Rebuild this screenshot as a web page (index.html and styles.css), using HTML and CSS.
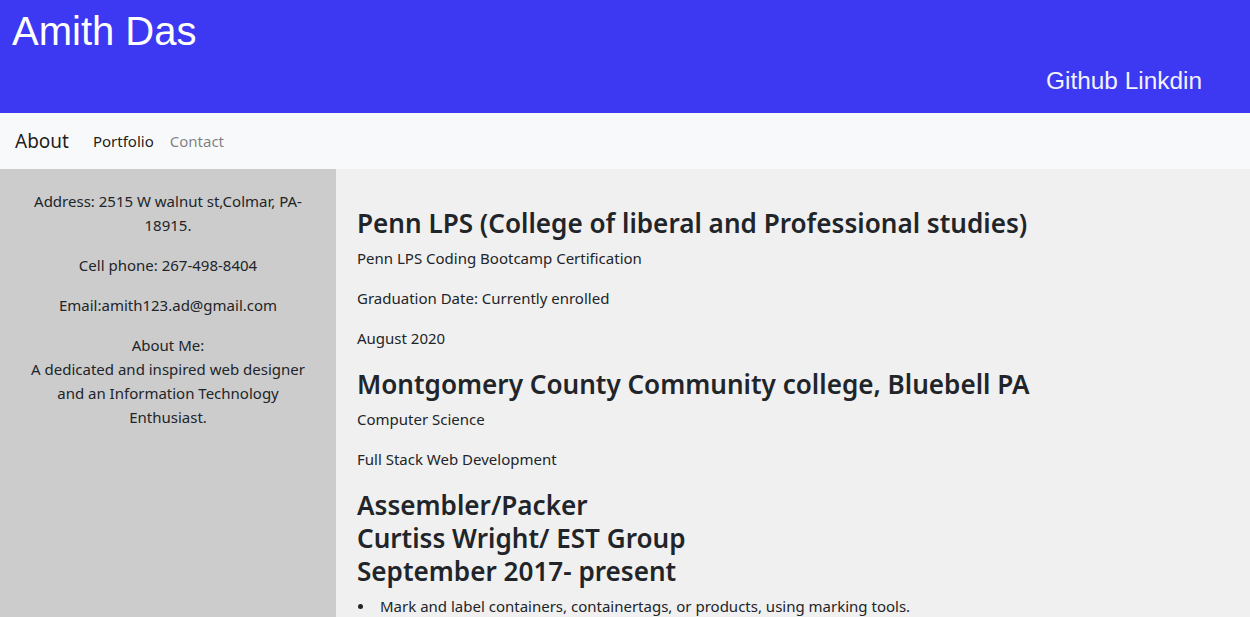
FILE: index.html
```html
<!DOCTYPE html>
<html lang="en">
<head>
<meta charset="utf-8">
<title>Amith Das</title>
<link rel="stylesheet" href="styles.css">
</head>
<body>
<header class="masthead">
  <h1 class="masthead-title">Amith Das</h1>
  <div class="masthead-links">
    <a href="#" class="masthead-link">Github</a>
    <a href="#" class="masthead-link">Linkdin</a>
  </div>
</header>
<nav class="navbar">
  <a href="#" class="navbar-brand">About</a>
  <a href="#" class="nav-link active">Portfolio</a>
  <a href="#" class="nav-link">Contact</a>
</nav>
<div class="layout">
  <aside class="sidebar">
    <p>Address: 2515 W walnut st,Colmar, PA-18915.</p>
    <p>Cell phone: 267-498-8404</p>
    <p>Email:amith123.ad@gmail.com</p>
    <p>About Me:<br>A dedicated and inspired web designer and an Information Technology Enthusiast.</p>
  </aside>
  <main class="content">
    <h3 class="section-title">Penn LPS (College of liberal and Professional studies)</h3>
    <p>Penn LPS Coding Bootcamp Certification</p>
    <p>Graduation Date: Currently enrolled</p>
    <p>August 2020</p>
    <h3 class="section-title">Montgomery County Community college, Bluebell PA</h3>
    <p>Computer Science</p>
    <p>Full Stack Web Development</p>
    <h3 class="section-title">Assembler/Packer<br>Curtiss Wright/ EST Group<br>September 2017- present</h3>
    <ul class="duties">
      <li>Mark and label containers, containertags, or products, using marking tools.</li>
    </ul>
  </main>
</div>
</body>
</html>
```
FILE: styles.css
```css
html, body {
  margin: 0;
  padding: 0;
}
body {
  font-family: "Noto Sans", "Open Sans", sans-serif;
  font-size: 15px;
  line-height: 24px;
  color: #212529;
  background: #f0f0f0;
  overflow: hidden;
}
.masthead {
  background: #3d38f1;
  height: 113px;
  box-sizing: border-box;
  padding: 7px 48px 0 12px;
  display: flex;
  flex-direction: column;
}
.masthead-title {
  margin: 0;
  font-family: "Liberation Sans", Arial, sans-serif;
  font-size: 40px;
  line-height: 48px;
  font-weight: 400;
  color: #ffffff;
}
.masthead-links {
  align-self: flex-end;
  margin-top: 12px;
  font-family: "Liberation Sans", Arial, sans-serif;
  font-size: 24.4px;
  line-height: 28px;
}
.masthead-link {
  color: #f2f2ff;
  text-decoration: none;
}
.navbar {
  background: #f8f9fa;
  height: 56px;
  box-sizing: border-box;
  padding: 0 16px 0 15px;
  display: flex;
  align-items: center;
}
.navbar-brand {
  font-size: 19px;
  color: rgba(0, 0, 0, 0.9);
  text-decoration: none;
  margin-right: 16px;
}
.nav-link {
  font-size: 15px;
  padding: 0 8px;
  color: rgba(0, 0, 0, 0.5);
  text-decoration: none;
}
.nav-link.active {
  color: rgba(0, 0, 0, 0.9);
}
.layout {
  display: flex;
  min-height: 448px;
}
.sidebar {
  width: 336px;
  flex: 0 0 336px;
  box-sizing: border-box;
  background: #cccccc;
  padding: 20px 23px 0;
  text-align: center;
}
.sidebar p {
  margin: 0 0 16px;
}
.content {
  flex: 1;
  padding: 36px 21px 0;
}
.content p {
  margin: 0 0 16px;
}
.section-title {
  margin: 0 0 6px;
  padding-top: 2px;
  font-size: 26.1px;
  line-height: 33px;
  font-weight: 600;
}
.duties {
  margin: 0;
  padding: 0;
  list-style: none;
}
.duties li::before {
  content: "";
  display: inline-block;
  width: 5px;
  height: 5px;
  border-radius: 50%;
  background: #212529;
  margin: 0 17px 2px 1px;
  vertical-align: middle;
}
```
